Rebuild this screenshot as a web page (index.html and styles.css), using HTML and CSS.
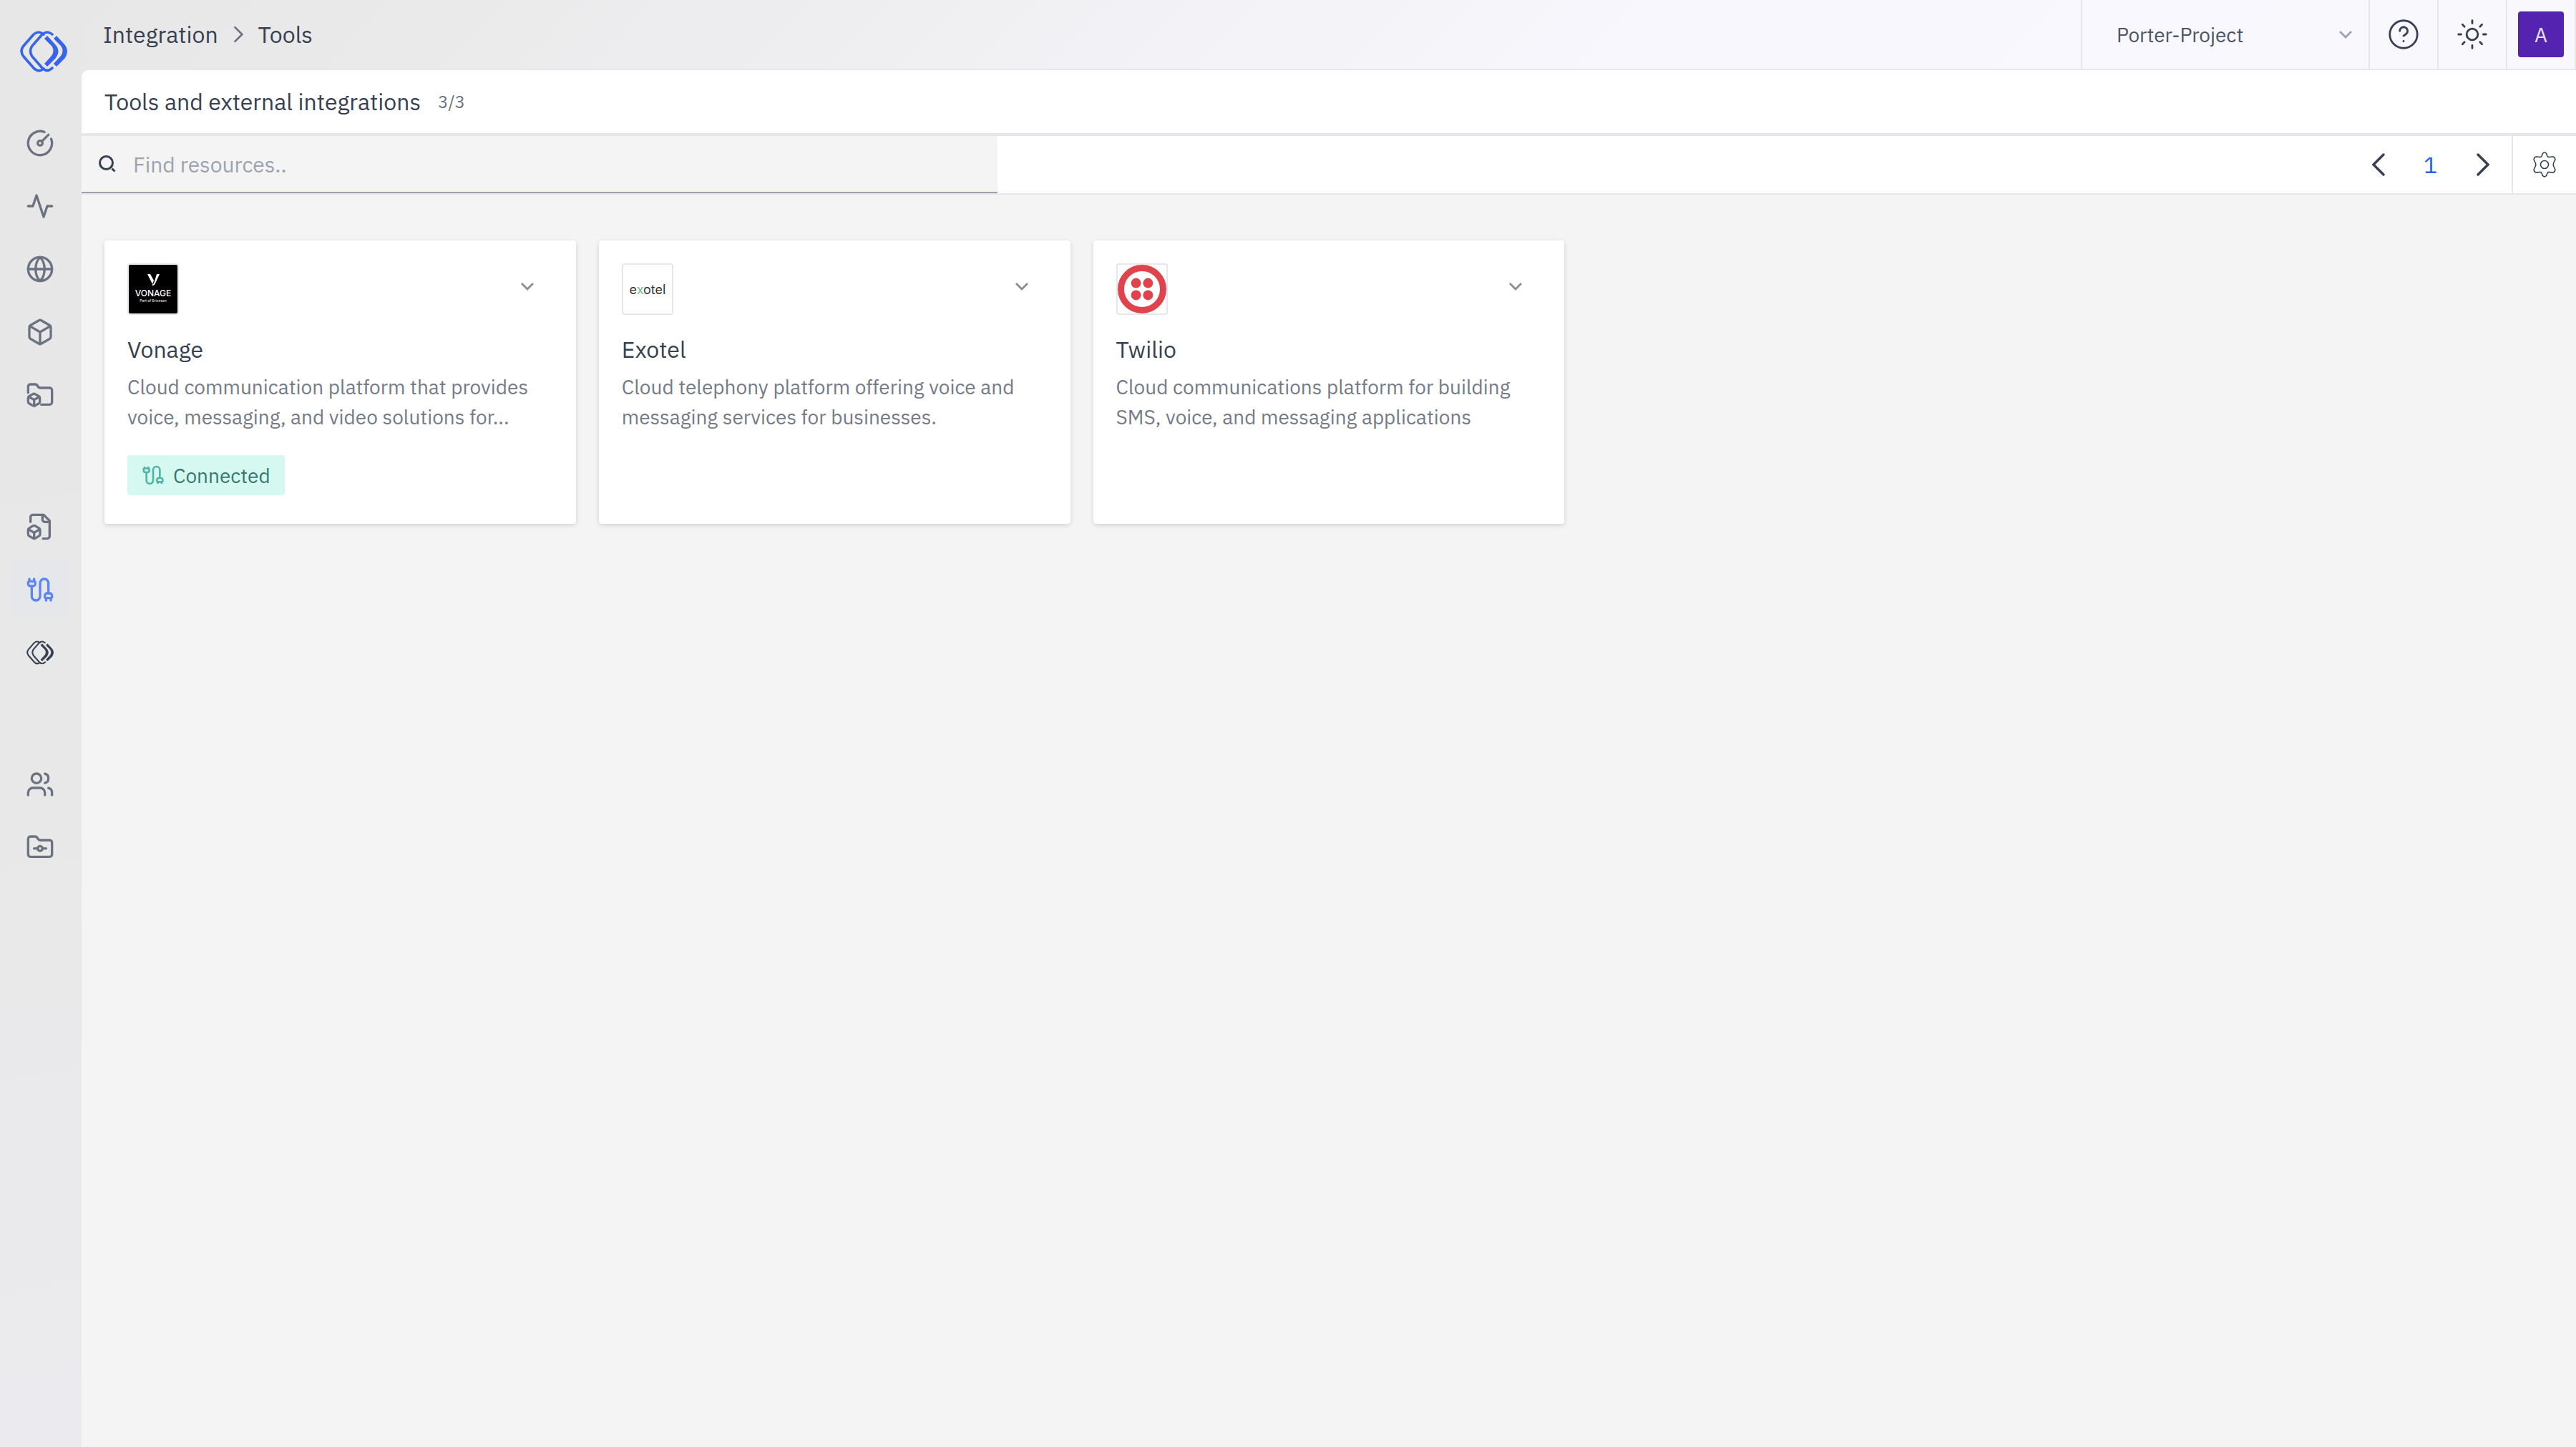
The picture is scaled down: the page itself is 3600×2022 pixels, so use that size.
FILE: index.html
```html
<!DOCTYPE html>
<html lang="en">
<head>
<meta charset="utf-8">
<title>Tools and external integrations</title>
<link rel="stylesheet" href="styles.css">
</head>
<body>
<svg class="defs" aria-hidden="true">
  <symbol id="brand" viewBox="0 0 66 58">
    <g fill="none" stroke="currentColor" stroke-width="3.6" stroke-linecap="round">
      <path d="M33 5Q26-1 19 5L5 21Q-1 28 5 36L19 52Q26 59 33 53"/>
      <path d="M45 5Q38-1 31 5L17 21Q12 28 17 36L31 52Q38 59 45 52"/>
    </g>
    <path fill="currentColor" d="M38 7L50 20Q57 28 50 38L38 50L34 46L44 35Q49 28 44 21L34 11Z"/>
    <path fill="currentColor" d="M51 7L63 20Q69 28 63 38L51 50L47 46L57 35Q62 28 57 21L47 11Z"/>
  </symbol>
  <symbol id="gauge" viewBox="0 0 24 24"><path d="M15.6 2.7a10 10 0 1 0 5.7 5.7"/><circle cx="12" cy="12" r="2"/><path d="M13.4 10.6 19 5"/></symbol>
  <symbol id="activity" viewBox="0 0 24 24"><path d="M22 12h-4l-3 9L9 3l-3 9H2"/></symbol>
  <symbol id="globe" viewBox="0 0 24 24"><circle cx="12" cy="12" r="10"/><path d="M2 12h20M12 2c-5 5-5 15 0 20 5-5 5-15 0-20"/></symbol>
  <symbol id="box" viewBox="0 0 24 24"><path d="M21 8a2 2 0 0 0-1-1.73l-7-4a2 2 0 0 0-2 0l-7 4A2 2 0 0 0 3 8v8a2 2 0 0 0 1 1.73l7 4a2 2 0 0 0 2 0l7-4A2 2 0 0 0 21 16Z"/><path d="m3.3 7 8.7 5 8.7-5M12 22V12"/></symbol>
  <symbol id="folder-box" viewBox="0 0 24 24"><path d="M2 10V5a2 2 0 0 1 2-2h3.9a2 2 0 0 1 1.69.9l.81 1.2a2 2 0 0 0 1.67.9H20a2 2 0 0 1 2 2v10a2 2 0 0 1-2 2h-7"/><path d="M7.8 11.2a2 2 0 0 0-1.8 0l-3 1.7A2 2 0 0 0 2 14.5v3a2 2 0 0 0 1 1.7l3 1.6a2 2 0 0 0 1.8 0l3-1.6a2 2 0 0 0 1-1.7v-3a2 2 0 0 0-1-1.6Z"/><path d="M7 21v-5l-4.5-2.5M7 16l4.5-2.5"/></symbol>
  <symbol id="file-box" viewBox="0 0 24 24"><path d="M14.5 22H18a2 2 0 0 0 2-2V7l-5-5H6a2 2 0 0 0-2 2v4"/><path d="M14 2v4a2 2 0 0 0 2 2h4"/><path d="M3 13.1a2 2 0 0 0-1 1.76v3.24a2 2 0 0 0 .97 1.78L6 21.7a2 2 0 0 0 2.03.01L11 19.9a2 2 0 0 0 1-1.76V14.9a2 2 0 0 0-.97-1.78L8 11.3a2 2 0 0 0-2.03-.01Z"/><path d="M7 17v5M11.7 14.2 7 17l-4.7-2.8"/></symbol>
  <symbol id="cable" viewBox="0 0 24 24"><path d="M17 21v-2a1 1 0 0 1-1-1v-1a2 2 0 0 1 2-2h2a2 2 0 0 1 2 2v1a1 1 0 0 1-1 1v2M17 19h4"/><path d="M19 15V6.5a1 1 0 0 0-7 0v11a1 1 0 0 1-7 0V9"/><path d="M3 5V3M7 5V3M4 9a2 2 0 0 1-2-2V6a1 1 0 0 1 1-1h4a1 1 0 0 1 1 1v1a2 2 0 0 1-2 2Z"/></symbol>
  <symbol id="users" viewBox="0 0 24 24"><circle cx="9" cy="7" r="4"/><path d="M16 3.13a4 4 0 0 1 0 7.75M2 21v-2a4 4 0 0 1 4-4h6a4 4 0 0 1 4 4v2M22 21v-2a4 4 0 0 0-3-3.87"/></symbol>
  <symbol id="folder-git" viewBox="0 0 24 24"><path d="M4 20h16a2 2 0 0 0 2-2V8a2 2 0 0 0-2-2h-7.93a2 2 0 0 1-1.66-.9l-.82-1.2A2 2 0 0 0 7.93 3H4a2 2 0 0 0-2 2v13a2 2 0 0 0 2 2Z"/><circle cx="12" cy="13" r="2"/><path d="M14 13h3M7 13h3"/></symbol>
  <symbol id="down" viewBox="0 0 24 24"><path d="m6 9 6 6 6-6"/></symbol>
  <symbol id="right" viewBox="0 0 24 24"><path d="m8 4 8 8-8 8"/></symbol>
  <symbol id="left" viewBox="0 0 24 24"><path d="m16 4-8 8 8 8"/></symbol>
  <symbol id="search" viewBox="0 0 24 24"><circle cx="10.5" cy="10.5" r="9"/><path d="m18.5 18.5 4 4"/></symbol>
  <symbol id="help" viewBox="0 0 24 24"><circle cx="12" cy="12" r="11"/><path d="M9 9.3a3.1 3.1 0 1 1 4.9 2.500Q12.800 12.700 12 13.200M12 17.400v.2"/></symbol>
  <symbol id="sun" viewBox="0 0 24 24"><circle cx="12" cy="12" r="4.5"/><path d="M12 1v2.200M12 20.800v2.200M1 12h2.200M20.800 12h2.200M4.200 4.200l1.600 1.600M18.200 18.200l1.600 1.600M4.200 19.800l1.600-1.600M18.200 5.800l1.600-1.600"/></symbol>
  <symbol id="gear" viewBox="0 0 24 24"><circle cx="12" cy="12" r="3.5"/><path d="M10.3 2.3Q12 .2 13.7 2.3L14.4 4.3Q15 5.6 16.4 5.4L18.9 5Q21.300 5 21.400 7.800L20.200 10.100Q19.300 12 20.200 13.900L21.400 16.200Q21.300 19 18.900 19L16.400 18.600Q15 18.400 14.400 19.700L13.700 21.700Q12 23.800 10.300 21.700L9.600 19.700Q9 18.400 7.600 18.600L5.100 19Q2.700 19 2.600 16.200L3.800 13.900Q4.700 12 3.800 10.100L2.600 7.800Q2.700 5 5.100 5L7.600 5.400Q9 5.600 9.600 4.300Z"/></symbol>
</svg>
<div class="app">
  <nav class="sidebar" aria-label="Main">
    <a class="brand" href="#" aria-label="Home"><svg><use href="#brand"/></svg></a>
    <div class="group">
      <a class="item" href="#" aria-label="Dashboard"><svg class="icon"><use href="#gauge"/></svg></a>
      <a class="item" href="#" aria-label="Activity"><svg class="icon"><use href="#activity"/></svg></a>
      <a class="item" href="#" aria-label="Network"><svg class="icon"><use href="#globe"/></svg></a>
      <a class="item" href="#" aria-label="Models"><svg class="icon"><use href="#box"/></svg></a>
      <a class="item" href="#" aria-label="Collections"><svg class="icon"><use href="#folder-box"/></svg></a>
    </div>
    <div class="group">
      <a class="item" href="#" aria-label="Documents"><svg class="icon"><use href="#file-box"/></svg></a>
      <a class="item active" href="#" aria-label="Tools" aria-current="page"><svg class="icon"><use href="#cable"/></svg></a>
      <a class="item dark" href="#" aria-label="Platform"><svg class="mark"><use href="#brand"/></svg></a>
    </div>
    <div class="group">
      <a class="item" href="#" aria-label="Users"><svg class="icon"><use href="#users"/></svg></a>
      <a class="item" href="#" aria-label="Projects"><svg class="icon"><use href="#folder-git"/></svg></a>
    </div>
  </nav>
  <div class="content">
    <header class="topbar">
      <nav class="crumbs" aria-label="Breadcrumb"><a href="#">Integration</a><svg class="crumb-sep"><use href="#right"/></svg><a href="#">Tools</a></nav>
      <div class="project">
        <select aria-label="Project"><option>Porter-Project</option></select>
        <svg class="chevron faint"><use href="#down"/></svg>
      </div>
      <button class="square" aria-label="Help"><svg class="tool"><use href="#help"/></svg></button>
      <button class="square" aria-label="Theme"><svg class="tool"><use href="#sun"/></svg></button>
      <div class="account"><button class="avatar" aria-label="Account">A</button></div>
    </header>
    <main class="panel">
      <div class="heading"><h1>Tools and external integrations</h1><span class="count">3/3</span></div>
      <div class="toolbar">
        <label class="search"><svg class="glass"><use href="#search"/></svg><input type="text" placeholder="Find resources.." aria-label="Find resources"></label>
        <div class="pager">
          <button aria-label="Previous page"><svg class="arrow"><use href="#left"/></svg></button>
          <button class="page" aria-current="page">1</button>
          <button aria-label="Next page"><svg class="arrow"><use href="#right"/></svg></button>
        </div>
        <button class="settings" aria-label="Settings"><svg class="gear"><use href="#gear"/></svg></button>
      </div>
      <section class="cards">
        <article class="card">
          <div class="card-top">
            <svg class="logo vonage" viewBox="0 0 68 68" role="img" aria-label="Vonage">
              <path fill="#fff" d="M26 13h4l5 9-2 5zM39 13h4l-6 13q-1 3-4 3l-1-1q3-1 4-5z"/>
              <text x="34" y="44" font-size="12" font-weight="500">VONAGE</text>
              <text x="34" y="52" font-size="5">Part of Ericsson</text>
            </svg>
            <button class="more" aria-label="Vonage options"><svg class="chevron"><use href="#down"/></svg></button>
          </div>
          <h2>Vonage</h2>
          <p>Cloud communication platform that provides voice, messaging, and video solutions for...</p>
          <span class="tag"><svg class="tag-icon"><use href="#cable"/></svg>Connected</span>
        </article>
        <article class="card">
          <div class="card-top">
            <svg class="logo exotel" viewBox="0 0 68 68" role="img" aria-label="Exotel">
              <text x="34" y="41" font-size="18">e<tspan fill="#6cc08b">x</tspan>otel</text>
            </svg>
            <button class="more" aria-label="Exotel options"><svg class="chevron"><use href="#down"/></svg></button>
          </div>
          <h2>Exotel</h2>
          <p>Cloud telephony platform offering voice and messaging services for businesses.</p>
        </article>
        <article class="card">
          <div class="card-top">
            <svg class="logo" viewBox="0 0 68 68" role="img" aria-label="Twilio">
              <circle cx="34" cy="34" r="29.500" fill="none" stroke="#df444c" stroke-width="9"/>
              <g fill="#df444c"><circle cx="25.600" cy="25.600" r="7"/><circle cx="42.400" cy="25.600" r="7"/><circle cx="25.600" cy="42.400" r="7"/><circle cx="42.400" cy="42.400" r="7"/></g>
            </svg>
            <button class="more" aria-label="Twilio options"><svg class="chevron"><use href="#down"/></svg></button>
          </div>
          <h2>Twilio</h2>
          <p>Cloud communications platform for building SMS, voice, and messaging applications</p>
        </article>
      </section>
    </main>
  </div>
</div>
</body>
</html>
```
FILE: styles.css
```css
* { box-sizing: border-box; }
body {
  margin: 0;
  font-family: "IBM Plex Sans", Roboto, sans-serif;
  color: #374151;
}
button, input, select { font: inherit; color: inherit; border: 0; background: none; padding: 0; margin: 0; border-radius: 0; }
a { color: inherit; text-decoration: none; }
h1, h2, p { margin: 0; font-weight: 400; }
svg { display: block; flex: none; fill: none; stroke: none; }
.defs { position: absolute; width: 0; height: 0; }

.app {
  display: flex;
  min-height: 100vh;
  background: linear-gradient(135deg, #e7e7e7 0%, #eaeaeb 12%, #f8f7fd 42%, #f7f9fd 100%);
}

/* Sidebar */
.sidebar {
  width: 114px;
  flex: none;
  display: flex;
  flex-direction: column;
  gap: 104px;
  background: linear-gradient(170deg, #e7e7e7, #e8e8e8 50%, #ebebef);
}
.brand { height: 60px; margin: 43px 0 -47px 27px; color: #3764e8; }
.brand svg { width: 68px; height: 58px; }
.group { display: flex; flex-direction: column; gap: 8px; padding-left: 16px; }
.item { width: 80px; height: 80px; display: grid; place-items: center; color: #6b7280; }
.item.active { background: #e5e7eb; color: #5f85f0; }
.item.dark { color: #374151; }
.icon { width: 40px; height: 40px; stroke: currentColor; stroke-width: 2; stroke-linecap: round; stroke-linejoin: round; }
.mark { width: 38px; height: 34px; }

/* Top bar */
.content { flex: 1; min-width: 0; display: flex; flex-direction: column; }
.topbar { height: 98px; display: flex; border-bottom: 2px solid #e5e7eb; }
.crumbs { flex: 1; display: flex; align-items: center; padding-left: 30px; font-size: 32px; }
.crumb-sep { width: 32px; height: 32px; margin: 0 12px; stroke: #6b7280; stroke-width: 2; }
.project { width: 402px; display: grid; align-items: center; border-left: 2px solid #e5e7eb; font-size: 28px; color: #4b5563; }
.project > * { grid-area: 1 / 1; }
.project select { appearance: none; width: 100%; height: 100%; padding-left: 48px; }
.chevron { width: 32px; height: 32px; stroke: #868c98; stroke-width: 2; }
.chevron.faint { justify-self: end; margin-right: 16px; stroke: #9ca3af; pointer-events: none; }
.square { width: 96px; display: grid; place-items: center; border-left: 2px solid #e5e7eb; }
.tool { width: 42px; height: 42px; stroke: #374151; stroke-linecap: round; stroke-width: 1.6; }
.account { width: 98px; display: grid; place-items: center; border: solid #e5e7eb; border-width: 0 2px; }
.avatar { width: 64px; height: 64px; border-radius: 4px; background: #5424b0; color: #e9e3f8; font-size: 28px; }

/* Page panel */
.panel { flex: 1; background: #f4f4f4; border-top-left-radius: 10px; }
.heading { height: 92px; display: flex; align-items: center; gap: 24px; padding-left: 32px; background: #fff; border-bottom: 4px solid #e5e7eb; border-top-left-radius: 10px; }
.heading h1 { font-size: 32px; font-weight: 450; }
.count { font-size: 24px; color: #6b7280; }
.toolbar { height: 82px; display: flex; background: #fff; border-bottom: 2px solid #e5e7eb; }
.search { width: 1280px; display: flex; align-items: center; gap: 24px; padding-left: 24px; background: #f4f4f4; border-bottom: 2px solid #9ca3af; }
.search input { flex: 1; height: 100%; font-size: 30px; }
.search input::placeholder { color: #9ca3af; opacity: 1; }
.glass { width: 24px; height: 24px; stroke: #374151; stroke-width: 3; }
.pager { flex: 1; display: flex; justify-content: flex-end; align-items: center; padding-right: 4px; }
.pager button { width: 73px; height: 100%; display: grid; place-items: center; }
.pager .page { font-size: 32px; color: #2563eb; }
.arrow { width: 42px; height: 42px; stroke: #374151; stroke-width: 2; stroke-linecap: round; }
.settings { width: 90px; display: grid; place-items: center; border-left: 2px solid #e5e7eb; }
.gear { width: 38px; height: 38px; stroke: #374151; stroke-width: 1; }

/* Cards */
.cards { display: grid; grid-template-columns: repeat(5, 1fr); gap: 32px; padding: 64px 32px; }
.card { height: 396px; padding: 32px; background: #fff; border-radius: 4px; box-shadow: 0 2px 6px rgb(0 0 0 / 14%); }
.card-top { display: flex; justify-content: space-between; align-items: flex-start; }
.logo { width: 72px; height: 72px; border: 2px solid #e5e7eb; border-radius: 4px; }
.logo text { text-anchor: middle; font-family: Inter, sans-serif; }
.vonage { background: #000; }
.vonage text { fill: #fff; }
.exotel text { fill: #333; }
.more { width: 64px; height: 64px; display: grid; place-items: center; margin-right: 4px; }
.card h2 { margin-top: 28px; font-size: 32px; line-height: 40px; }
.card p { margin-top: 12px; font-size: 28px; line-height: 42px; color: #757b87; }
.tag { display: inline-flex; align-items: center; gap: 12px; height: 56px; margin-top: 32px; padding: 0 20px; border-radius: 4px; background: #d5f9f0; color: #37786f; font-size: 28px; font-weight: 450; }
.tag-icon { width: 32px; height: 32px; stroke: #52b5a7; stroke-width: 2; }
```
